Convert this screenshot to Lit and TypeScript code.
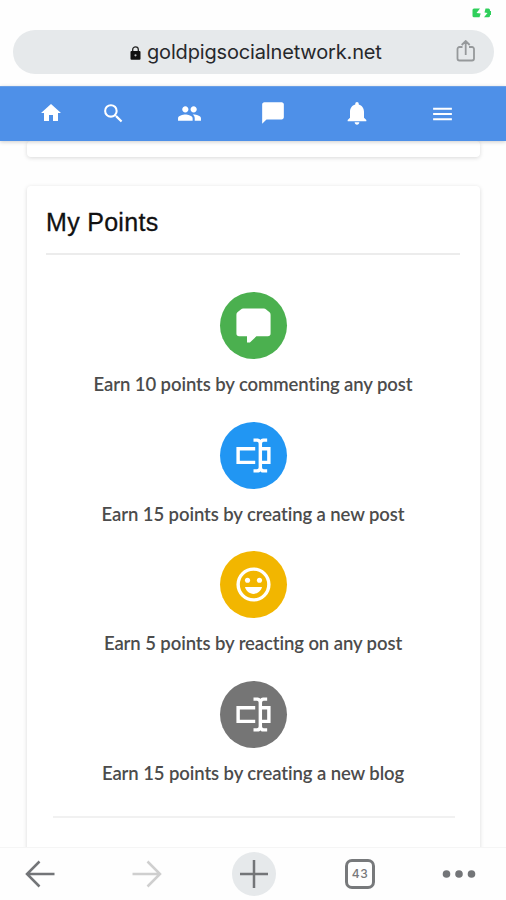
import { LitElement, html, css, svg } from "lit";
import { customElement } from "lit/decorators.js";

const rename = svg`<path d="M17 7h5v10h-5v2a1 1 0 0 0 1 1h2v2h-2.500c-.55 0-1.500-.45-1.500-1 0 .55-.95 1-1.500 1H12v-2h2a1 1 0 0 0 1-1V5a1 1 0 0 0-1-1h-2V2h2.500c.55 0 1.500.45 1.500 1 0-.55.95-1 1.500-1H20v2h-2a1 1 0 0 0-1 1v2M2 7h11v2H4v6h9v2H2V7m18 8V9h-3v6h3z"/>`;
const comment = svg`<path d="M6 2h12c.6 0 1 .2 1.400.6l2 1.700c.4.400.6.8.6 1.400v11c0 1-.6 1.600-1.600 1.600H13.700L9.900 22H8.200v-3.700H3.600c-1 0-1.600-.6-1.600-1.600v-11c0-.6.2-1 .6-1.400l2-1.700C5 2.200 5.400 2 6 2z"/>`;
const smile = svg`<path fill-rule="evenodd" d="M12 2a10 10 0 1 0 0 20 10 10 0 0 0 0-20m0 2a8 8 0 1 1 0 16 8 8 0 0 1 0-16"/><circle cx="8.500" cy="9.500" r="1.500"/><circle cx="15.500" cy="9.500" r="1.500"/><path d="M7 13.500h10c-.7 2.400-2.600 4-5 4s-4.300-1.600-5-4z"/>`;

const rewards = [
  { tone: "green", icon: comment, label: "Earn 10 points by commenting any post" },
  { tone: "blue", icon: rename, label: "Earn 15 points by creating a new post" },
  { tone: "yellow", icon: smile, label: "Earn 5 points by reacting on any post" },
  { tone: "gray", icon: rename, label: "Earn 15 points by creating a new blog" },
];

const navIcons = [
  { size: "s24", path: "M10 20v-6h4v6h5v-8h3L12 3 2 12h3v8z" },
  { size: "s25", path: "M15.500 14h-.79l-.28-.27A6.471 6.471 0 0 0 16 9.500 6.500 6.500 0 1 0 9.500 16c1.610 0 3.090-.59 4.230-1.570l.27.28v.79l5 4.990L20.490 19l-4.990-5zm-6 0C7.010 14 5 11.990 5 9.500S7.010 5 9.500 5 14 7.010 14 9.500 11.990 14 9.500 14z" },
  { size: "s25", path: "M16 11c1.660 0 2.990-1.340 2.990-3S17.660 5 16 5s-3 1.340-3 3 1.340 3 3 3zm-8 0c1.660 0 2.990-1.340 2.990-3S9.660 5 8 5 5 6.340 5 8s1.340 3 3 3zm0 2c-2.330 0-7 1.170-7 3.500V19h14v-2.500c0-2.330-4.670-3.500-7-3.500zm8 0c-.29 0-.62.020-.97.050 1.160.84 1.970 1.970 1.970 3.450V19h6v-2.500c0-2.330-4.670-3.500-7-3.500z" },
  { size: "s26", path: "M20 2H4c-1.100 0-2 .9-2 2v18l4-4h14c1.100 0 2-.9 2-2V4c0-1.100-.9-2-2-2z" },
  { size: "s28", path: "M12 22c1.100 0 2-.9 2-2h-4c0 1.100.9 2 2 2zm6-6v-5c0-3.070-1.640-5.640-4.500-6.320V4a1.500 1.500 0 0 0-3 0v.68C7.630 5.360 6 7.920 6 11v5l-2 2v1h16v-1l-2-2z" },
  { size: "s25", path: "M3 18.400h18v-1.900H3v1.900zM3 13.400h18v-1.900H3v1.900zM3 6.500v1.900h18V6.500H3z" },
];

@customElement("app-root")
export class AppRoot extends LitElement {
  static styles = css`
    :host {
      display: flex;
      flex-direction: column;
      height: 900px;
      width: 506px;
      overflow: hidden;
      background: #fefefe;
      font-family: "Liberation Sans", sans-serif;
    }
    * { box-sizing: border-box; }
    svg { display: block; flex: none; }
    .status {
      height: 30px;
      flex: none;
      display: flex;
      justify-content: flex-end;
      padding: 8px 14px 0 0;
    }
    .address {
      height: 44px;
      flex: none;
      margin: 0 12px 0 13px;
      border-radius: 22px;
      background: #e6e9eb;
      display: grid;
      grid-template-columns: 117px 1fr 38px;
      align-items: center;
    }
    .lock { justify-self: start; margin-top: 1px; }
    .host {
      display: flex;
      align-items: center;
      gap: 6px;
      color: #26282b;
      font: 400 20px/44px Inter, sans-serif;
      letter-spacing: -0.16px;
      white-space: nowrap;
    }
    .nav {
      height: 55px;
      flex: none;
      margin-top: 12px;
      padding-bottom: 2px;
      background: #4e90e8;
      border-top: 1px solid #699fe6;
      box-shadow: 0 1px 4px rgba(0, 0, 0, 0.2);
      display: grid;
      grid-template-columns: 101px 25px 127px 39px 130px 41px;
      place-items: center;
      z-index: 1;
      fill: #fff;
    }
    .s24 { width: 24px; height: 24px; }
    .s25 { width: 25px; height: 25px; }
    .s26 { width: 26px; height: 26px; }
    .s28 { width: 28px; height: 28px; }
    .page {
      flex: 1;
      min-height: 0;
      overflow: hidden;
      padding: 0 26px 0 27px;
    }
    .card {
      background: #fff;
      border-radius: 4px;
      box-shadow: 0 1px 4px rgba(0, 0, 0, 0.15);
    }
    .previous { height: 16px; margin-bottom: 29px; }
    .points { height: 700px; padding: 0 20px 0 19px; }
    h2 {
      margin: 0;
      height: 69px;
      border-bottom: 2px solid #ececec;
      color: #111;
      font-weight: 400;
      font-size: 25px;
      line-height: 73px;
      letter-spacing: 0.3px;
      -webkit-text-stroke: 0.3px #111;
    }
    ul {
      list-style: none;
      margin: 0 5px 0 7px;
      padding: 37px 2px 0 0;
      height: 563px;
      border-bottom: 2px solid #f1f1f1;
    }
    li {
      height: 129.6px;
      display: flex;
      flex-direction: column;
      align-items: center;
      color: #4c4c4c;
      font: 600 18.5px/24px Lato, sans-serif;
      font-variant-ligatures: none;
      letter-spacing: -0.09px;
      white-space: nowrap;
    }
    .badge {
      width: 67px;
      height: 67px;
      border-radius: 50%;
      display: grid;
      place-items: center;
      fill: #fff;
      margin-bottom: 13px;
    }
    .green { background: #4bb04f; }
    .blue { background: #2196f3; }
    .yellow { background: #f2b600; }
    .gray { background: #757575; }
    .toolbar {
      height: 53px;
      flex: none;
      background: #fefefe;
      border-top: 1px solid #f5f5f5;
      display: grid;
      grid-template-columns: 80px 134px 79px 134px 64px;
      place-items: center;
      padding-bottom: 1px;
      fill: none;
      stroke: #737578;
      stroke-width: 2.500;
    }
    .forward { stroke: #cfcfcf; }
    .add {
      width: 44px;
      height: 44px;
      border-radius: 50%;
      background: #e6e9eb;
      display: grid;
      place-items: center;
    }
    .tabs {
      width: 30px;
      height: 30px;
      border: 3px solid #77797b;
      border-radius: 7px;
      color: #77797b;
      font: 500 12px/24px Inter, sans-serif;
      letter-spacing: 0.5px;
      text-align: center;
    }
    .dots { fill: #737578; stroke: none; }
  `;

  render() {
    return html`
      <div class="status">
        <svg width="20" height="10" viewBox="0 0 20 10" fill="#2fcf5b">
          <path d="M2 .5h6L4.500 5l4.200.5L7.500 9.300H2A1.500 1.500 0 0 1 .5 8V2A1.500 1.500 0 0 1 2 .5z" />
          <path d="M13.500.5h3A1.700 1.700 0 0 1 18 2v1h1v4h-1v1a1.700 1.700 0 0 1-1.500 1.300H12L15.500 5l-3-.5z" />
        </svg>
      </div>
      <div class="address">
        <span></span>
        <div class="host">
          <svg class="lock" width="11" height="14" viewBox="0 0 11 14">
            <path d="M2.700 6V3.600a2.800 2.800 0 0 1 5.600 0V6" fill="none" stroke="#222" stroke-width="1.300" />
            <rect x=".5" y="5" width="10" height="8.700" rx="1" fill="#111" />
            <circle cx="5.500" cy="9.300" r="1.100" fill="#b5b7b9" />
          </svg>
          <span>goldpigsocialnetwork.net</span>
        </div>
        <svg width="20" height="24" viewBox="0 0 20 24" fill="none" stroke="#96999b" stroke-width="1.800">
          <path d="M6.500 7H3.500a2 2 0 0 0-2 2v9.500a2 2 0 0 0 2 2h12.500a2 2 0 0 0 2-2V9a2 2 0 0 0-2-2H13M9.700 15V1.200M5.700 5l4-4 4 4" />
        </svg>
      </div>
      <nav class="nav">
        ${navIcons.map((i) => html`<svg class=${i.size} viewBox="0 0 24 24"><path d=${i.path} /></svg>`)}
      </nav>
      <main class="page">
        <div class="card previous"></div>
        <section class="card points">
          <h2>My Points</h2>
          <ul>
            ${rewards.map(
              (r) => html`<li>
                <span class="badge ${r.tone}"><svg width="41" height="41" viewBox="0 0 24 24">${r.icon}</svg></span>
                <span>${r.label}</span>
              </li>`
            )}
          </ul>
        </section>
      </main>
      <footer class="toolbar">
        <svg width="30" height="28" viewBox="0 0 30 28"><path d="M29.500 14H2M14.500 1.500L2 14l12.500 12.500" /></svg>
        <svg class="forward" width="30" height="28" viewBox="0 0 30 28"><path d="M.5 14H28M15.500 1.500L28 14 15.500 26.500" /></svg>
        <span class="add"><svg width="30" height="30" viewBox="0 0 30 30"><path d="M15 1v28M1 15h28" /></svg></span>
        <span class="tabs">43</span>
        <svg class="dots" width="34" height="8" viewBox="0 0 34 8"><circle cx="4.500" cy="4" r="3.800" /><circle cx="17" cy="4" r="3.800" /><circle cx="29.500" cy="4" r="3.800" /></svg>
      </footer>
    `;
  }
}
